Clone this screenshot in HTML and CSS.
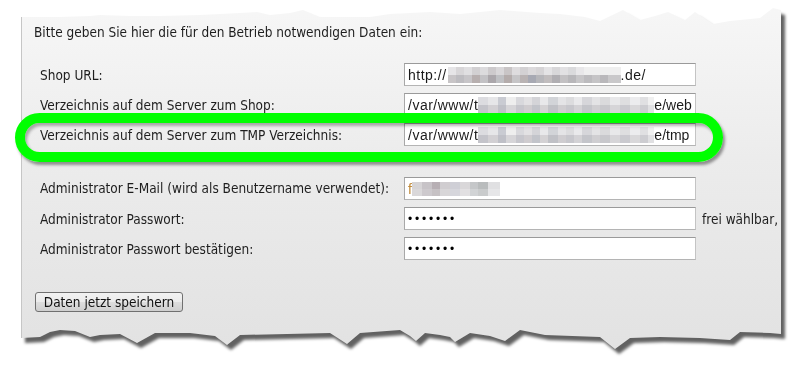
FILE: index.html
```html
<!DOCTYPE html>
<html lang="de">
<head>
<meta charset="utf-8">
<title>Shop Einstellungen</title>
<link rel="stylesheet" href="styles.css">
</head>
<body>
<div class="page">
  <div class="paper">
    <div class="sheet">
      <p class="intro">Bitte geben Sie hier die für den Betrieb notwendigen Daten ein:</p>
      <form class="form">
        <div class="grid">
          <label class="lbl">Shop URL:</label>
          <div class="field"><span>http://</span><span class="blur b-url"></span><span>.de/</span></div>
          <span class="note"></span>

          <label class="lbl">Verzeichnis auf dem Server zum Shop:</label>
          <div class="field"><span>/var/www/t</span><span class="blur b-dir"></span><span class="tail">e/web</span></div>
          <span class="note"></span>

          <label class="lbl">Verzeichnis auf dem Server zum TMP Verzeichnis:</label>
          <div class="field"><span>/var/www/t</span><span class="blur b-dir"></span><span class="tail">e/tmp</span></div>
          <span class="note"></span>

          <label class="lbl gap">Administrator E-Mail (wird als Benutzername verwendet):</label>
          <div class="field gap"><span class="b-first">f</span><span class="blur b-mail"></span></div>
          <span class="note gap"></span>

          <label class="lbl">Administrator Passwort:</label>
          <input class="field pw" type="password" value="1234567">
          <span class="note">frei wählbar,</span>

          <label class="lbl">Administrator Passwort bestätigen:</label>
          <input class="field pw" type="password" value="1234567">
          <span class="note"></span>
        </div>
        <button class="btn" type="button">Daten jetzt speichern</button>
      </form>
    </div>
  </div>
  <div class="ring"></div>
</div>
</body>
</html>
```
FILE: styles.css
```css
html, body {
  margin: 0;
  padding: 0;
  background: #ffffff;
}

.page {
  position: relative;
  width: 793px;
  height: 367px;
  overflow: hidden;
}

.paper {
  padding-left: 21px;
  filter: drop-shadow(4px 5px 1.5px rgba(0, 0, 0, 0.62));
}

.sheet {
  box-sizing: border-box;
  width: 760px;
  height: 352px;
  padding: 24px 0 0 12px;
  border-left: 1px solid #c6c6c6;
  background: linear-gradient(180deg, #f7f7f7 0%, #ececec 45%, #e2e2e2 100%);
  font-family: "DejaVu Sans Condensed", "DejaVu Sans", sans-serif;
  font-stretch: condensed;
  font-size: 13.5px;
  line-height: 16px;
  color: #1e1e1e;
  overflow: hidden;
  clip-path: polygon(
    0 17px, 39px 17px, 69px 16px, 79px 15px, 109px 16px, 139px 16px, 179px 15px, 219px 13px,
    236px 12px, 249px 15px, 269px 13px, 282px 10px, 299px 17px, 349px 17px, 369px 14px,
    409px 12px, 439px 14px, 479px 10px, 519px 13px, 539px 14px, 564px 17px, 579px 21px,
    602px 10px, 619px 20px, 634px 16px, 647px 12px, 664px 20px, 674px 12px, 692px 24px,
    709px 21px, 739px 18px, 752px 8px, 760px 10px,
    760px 334px,
    749px 333px, 719px 332px, 709px 340px, 679px 338px, 639px 337px, 609px 338px,
    594px 349px, 579px 337px, 524px 335px, 499px 330px, 484px 341px, 469px 336px,
    449px 333px, 434px 342px, 429px 337px, 419px 335px, 404px 333px, 395px 341px,
    389px 336px, 379px 330px, 339px 333px, 326px 344px, 309px 333px, 219px 335px,
    206px 345px, 194px 336px, 169px 333px, 134px 333px, 116px 343px, 99px 334px,
    79px 335px, 69px 337px, 54px 331px, 39px 330px, 29px 332px, 19px 337px, 0 338px
  );
}

.intro {
  margin: 0;
  white-space: nowrap;
}

.form {
  margin: 23px 0 0 6px;
}

.grid {
  display: grid;
  grid-template-columns: 364px 292px 80px;
  grid-template-rows: 23px 23px 23px 47px 23px 23px;
  row-gap: 7px;
  align-items: center;
}

.lbl {
  white-space: nowrap;
}

.grid .gap {
  align-self: end;
  line-height: 23px;
}

.field {
  box-sizing: border-box;
  height: 23px;
  width: 292px;
  margin: 0;
  padding: 0 0 0 3px;
  display: flex;
  align-items: center;
  overflow: hidden;
  white-space: nowrap;
  background: #ffffff;
  border: 1px solid #a8a8a8;
  border-top-color: #9a9a9a;
  border-right-color: #c4c4c4;
  border-bottom-color: #b4b4b4;
  font-family: "Liberation Sans", Arial, sans-serif;
  font-stretch: normal;
  font-size: 14px;
  letter-spacing: 0.5px;
  color: #1a1a1a;
}

.tail {
  letter-spacing: 0;
}

.grid .field.gap {
  line-height: normal;
}

.pw {
  display: block;
  font-size: 12px;
  letter-spacing: 2.8px;
  color: #000;
  outline: none;
}

.note {
  padding-left: 6px;
  white-space: nowrap;
}

.blur {
  display: inline-block;
  height: 16px;
  flex: none;
  background-repeat: no-repeat;
  background-size: 100% 8px;
  background-position: 0 0, 0 8px;
}

.b-url {
  width: 173px;
  margin-left: 1px;
  background-image:
    linear-gradient(90deg, #e6e5e7 0 8px, #d8d6d8 8px 16px, #e0dfe1 16px 24px, #d2d0d2 24px 32px, #dcdbdd 32px 40px,
      #cdcacc 40px 48px, #d9d7d9 48px 56px, #c9c5c6 56px 64px, #dedcde 64px 72px, #d3d1d3 72px 80px, #dcdadc 80px 88px,
      #d6d4d6 88px 96px, #e4e3e5 96px 104px, #d8d7d9 104px 112px, #e2e1e3 112px 120px, #dadadc 120px 128px,
      #e8e7e9 128px 136px, #efefef 136px 173px),
    linear-gradient(90deg, #c8c5c7 0 8px, #bdbcc0 8px 16px, #c7c5c8 16px 24px, #b7afaf 24px 32px, #c3c2c5 32px 40px,
      #aba7ab 40px 48px, #bfc0c3 48px 56px, #b4acab 56px 64px, #c6c5c7 64px 72px, #b9b3b3 72px 80px, #a7a9b3 80px 88px,
      #b6b6ba 88px 96px, #c1bdbe 96px 104px, #b0aeb2 104px 112px, #c3c1c3 112px 120px, #b8b7ba 120px 128px,
      #c7c6c8 128px 136px, #bcbbbe 136px 144px, #c5c4c6 144px 152px, #b9b8bb 152px 160px, #c9c8ca 160px 173px);
}

.b-dir {
  width: 176px;
  background-image:
    linear-gradient(90deg, #dcdce0 0 10px, #e6e6e8 10px 20px, #c9cbd2 20px 28px, #eeeeee 28px 38px, #d8d8dc 38px 46px,
      #e2e1e3 46px 54px, #d4d4d8 54px 62px, #e8e8ea 62px 70px, #d2d4d8 70px 80px, #e4e4e6 80px 88px, #dcdcde 88px 96px,
      #e9e9eb 96px 104px, #d6d6da 104px 114px, #e3e3e5 114px 122px, #dadadc 122px 132px, #e8e8ea 132px 142px,
      #dedee0 142px 152px, #ececee 152px 162px, #e0e0e2 162px 170px, #f0f0f0 170px 176px),
    linear-gradient(90deg, #c4c4ca 0 10px, #d2d0d3 10px 20px, #bfc0c7 20px 28px, #d6d5d8 28px 38px, #c6c6cc 38px 46px,
      #cfcccf 46px 54px, #c2c4ca 54px 62px, #d4d2d4 62px 70px, #c0c1c6 70px 80px, #cfcdd0 80px 88px, #c7c7cc 88px 96px,
      #d3d2d5 96px 104px, #c4c5ca 104px 114px, #cfced1 114px 122px, #c8c8cc 122px 132px, #d6d5d8 132px 142px,
      #cacacf 142px 152px, #d9d8da 152px 162px, #cdcdd1 162px 170px, #e0e0e2 170px 176px);
}

.b-first {
  color: #c08a3a;
}

.b-mail {
  width: 88px;
  height: 14px;
  background-size: 100% 7px;
  background-position: 0 0, 0 7px;
  background-image:
    linear-gradient(90deg, #d6d4d6 0 10px, #c7c3c7 10px 20px, #b7afb4 20px 28px, #d0cdd0 28px 38px, #cfcfd6 38px 48px,
      #d9d7d9 48px 58px, #c5c7c9 58px 66px, #b9bcbd 66px 76px, #e0e0e2 76px 88px),
    linear-gradient(90deg, #dad8da 0 10px, #cdc9cd 10px 20px, #c6c1c4 20px 28px, #d8d6d8 28px 38px, #d6d6dc 38px 48px,
      #e2e0e2 48px 58px, #d1d3d5 58px 66px, #c9cbcc 66px 76px, #e6e6e8 76px 88px);
}

.btn {
  display: block;
  box-sizing: border-box;
  margin: 32px 0 0 -5px;
  width: 148px;
  height: 20px;
  padding: 0;
  border: 1px solid #707070;
  border-radius: 3px;
  background: linear-gradient(180deg, #f2f2f2 0%, #ebebeb 50%, #dddddd 51%, #cfcfcf 100%);
  font-family: "DejaVu Sans Condensed", "DejaVu Sans", sans-serif;
  font-stretch: condensed;
  font-size: 13.5px;
  color: #111;
}

.ring {
  position: absolute;
  left: 15px;
  top: 113px;
  box-sizing: border-box;
  width: 708px;
  height: 49px;
  border: 10px solid #00ff00;
  border-radius: 25px;
  box-shadow: 2px 3px 3px rgba(0, 0, 0, 0.4), inset 2px 3px 3px rgba(0, 0, 0, 0.3);
}
```
